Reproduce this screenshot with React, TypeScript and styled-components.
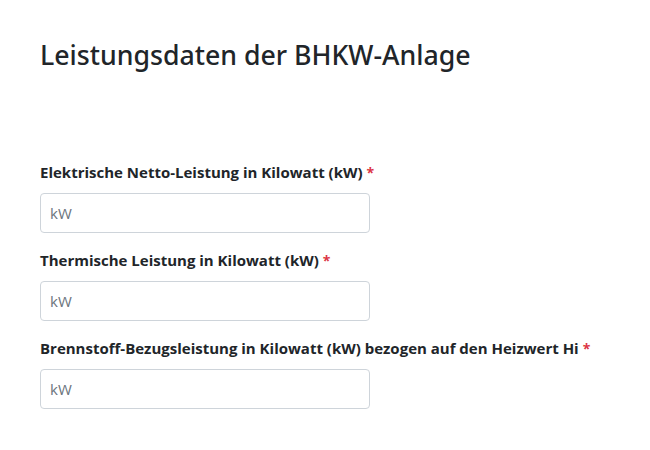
import React from 'react';
import styled, { createGlobalStyle } from 'styled-components';

const GlobalStyle = createGlobalStyle`
  body {
    margin: 0;
    background: #fff;
    font-family: "Open Sans", "Noto Sans", sans-serif;
    color: #212529;
  }
`;

const Page = styled.div`
  padding: 38px 40px 0 40px;
`;

const Heading = styled.h2`
  margin: 0 0 89px 0;
  font-family: "Noto Sans", "Open Sans", sans-serif;
  font-size: 26.7px;
  font-weight: 500;
  line-height: 34px;
  color: #212529;
`;

const Field = styled.div`
  display: flex;
  flex-direction: column;
  margin-bottom: 16px;
`;

const Label = styled.label`
  font-size: 15px;
  font-weight: 700;
  line-height: 22px;
  margin-bottom: 9px;
`;

const Required = styled.span`
  color: #dc3545;
  margin-left: 4px;
  font-size: 14px;
`;

const Input = styled.input`
  box-sizing: border-box;
  width: 330px;
  height: 40px;
  padding: 6px 9px;
  font-family: inherit;
  font-size: 15px;
  color: #212529;
  border: 1px solid #ced4da;
  border-radius: 4px;
  outline: none;

  &::placeholder {
    color: #6c757d;
  }
`;

const fields = [
  'Elektrische Netto-Leistung in Kilowatt (kW)',
  'Thermische Leistung in Kilowatt (kW)',
  'Brennstoff-Bezugsleistung in Kilowatt (kW) bezogen auf den Heizwert Hi',
];

export default function App() {
  return (
    <>
      <GlobalStyle />
      <Page>
        <Heading>Leistungsdaten der BHKW-Anlage</Heading>
        {fields.map((text) => (
          <Field key={text}>
            <Label>
              {text}
              <Required>*</Required>
            </Label>
            <Input type="text" placeholder="kW" />
          </Field>
        ))}
      </Page>
    </>
  );
}
